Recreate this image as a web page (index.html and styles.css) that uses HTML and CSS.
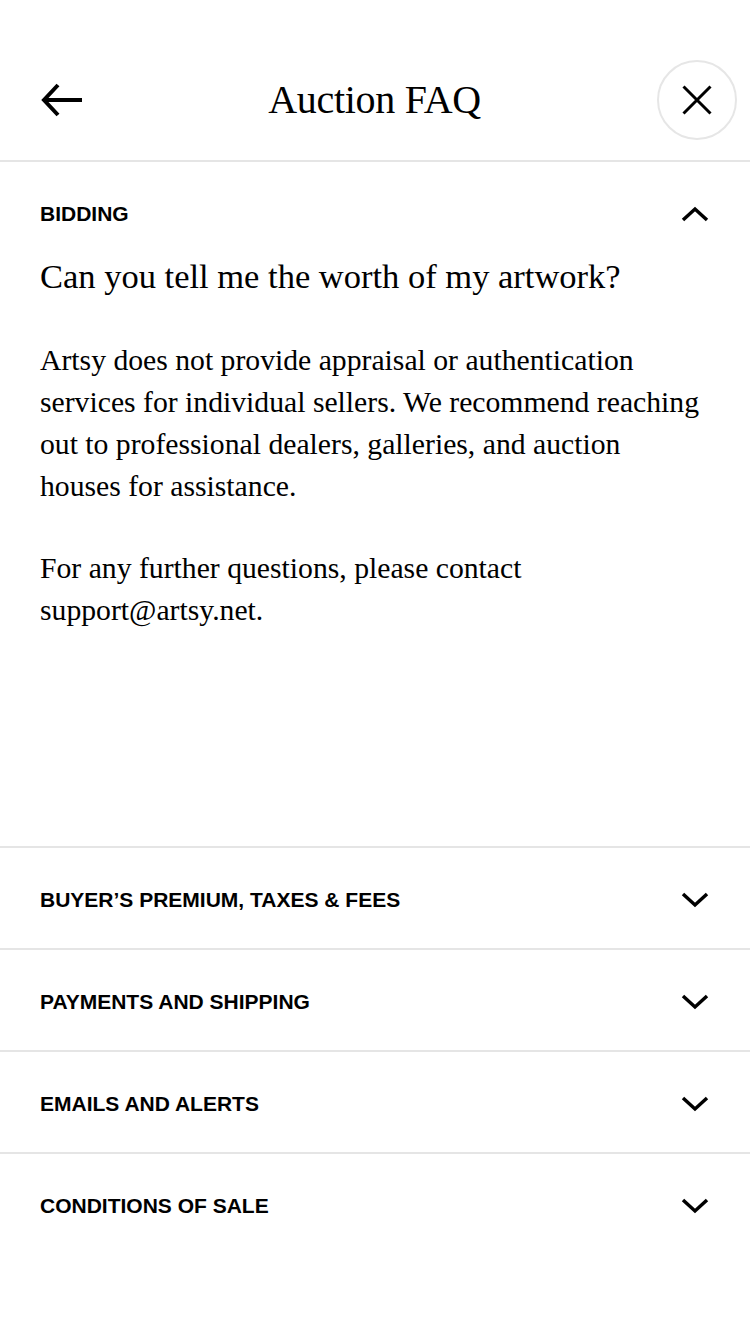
FILE: index.html
```html
<!DOCTYPE html>
<html lang="en">
<head>
<meta charset="utf-8">
<title>Auction FAQ</title>
<link rel="stylesheet" href="styles.css">
</head>
<body>
<div class="screen">
  <header class="topbar">
    <button class="back" aria-label="Back">
      <svg width="44" height="36" viewBox="0 0 44 36"><path d="M42 18H5M18 3L4 18l14 15" fill="none" stroke="#000" stroke-width="4"/></svg>
    </button>
    <h1 class="title">Auction FAQ</h1>
    <button class="close" aria-label="Close">
      <svg width="30" height="30" viewBox="0 0 30 30"><path d="M1.5 1.5l27 27M28.5 1.5l-27 27" fill="none" stroke="#000" stroke-width="3"/></svg>
    </button>
  </header>

  <section class="faq open">
    <div class="faq-head">
      <span class="faq-label">BIDDING</span>
      <svg class="chev" width="28" height="16" viewBox="0 0 28 16"><path d="M2 14L14 3l12 11" fill="none" stroke="#000" stroke-width="3.5"/></svg>
    </div>
    <h2 class="question">Can you tell me the worth of my artwork?</h2>
    <p class="answer">Artsy does not provide appraisal or authentication<br>services for individual sellers. We recommend reaching<br>out to professional dealers, galleries, and auction<br>houses for assistance.</p>
    <p class="answer">For any further questions, please contact<br>support@artsy.net.</p>
  </section>

  <section class="faq">
    <div class="faq-head">
      <span class="faq-label">BUYER’S PREMIUM, TAXES &amp; FEES</span>
      <svg class="chev" width="28" height="16" viewBox="0 0 28 16"><path d="M2 2l12 11L26 2" fill="none" stroke="#000" stroke-width="3.5"/></svg>
    </div>
  </section>
  <section class="faq">
    <div class="faq-head">
      <span class="faq-label">PAYMENTS AND SHIPPING</span>
      <svg class="chev" width="28" height="16" viewBox="0 0 28 16"><path d="M2 2l12 11L26 2" fill="none" stroke="#000" stroke-width="3.5"/></svg>
    </div>
  </section>
  <section class="faq">
    <div class="faq-head">
      <span class="faq-label">EMAILS AND ALERTS</span>
      <svg class="chev" width="28" height="16" viewBox="0 0 28 16"><path d="M2 2l12 11L26 2" fill="none" stroke="#000" stroke-width="3.5"/></svg>
    </div>
  </section>
  <section class="faq">
    <div class="faq-head">
      <span class="faq-label">CONDITIONS OF SALE</span>
      <svg class="chev" width="28" height="16" viewBox="0 0 28 16"><path d="M2 2l12 11L26 2" fill="none" stroke="#000" stroke-width="3.5"/></svg>
    </div>
  </section>
</div>
</body>
</html>
```

FILE: styles.css
```css
* { box-sizing: border-box; }
html, body { margin: 0; padding: 0; background: #fff; }
body {
  width: 750px;
  height: 1334px;
  overflow: hidden;
  color: #000;
  font-family: "Liberation Serif", "Times New Roman", serif;
}
button {
  background: none;
  border: 0;
  padding: 0;
  margin: 0;
  cursor: pointer;
}

.topbar {
  height: 162px;
  border-bottom: 2px solid #e5e5e5;
  display: flex;
  align-items: center;
  justify-content: space-between;
  padding: 40px 13px 0 40px;
}
.back {
  width: 44px;
  height: 36px;
  display: flex;
  align-items: center;
  justify-content: center;
}
.back svg { display: block; }
.title {
  margin: 0;
  font-weight: normal;
  font-size: 40px;
  line-height: 48px;
  letter-spacing: -0.3px;
  padding-left: 8px;
}
.close {
  width: 80px;
  height: 80px;
  border-radius: 50%;
  border: 2px solid #e6e6e6;
  display: flex;
  align-items: center;
  justify-content: center;
}
.close svg { display: block; }

.faq {
  border-bottom: 2px solid #e5e5e5;
  padding: 0 40px;
}
.faq:last-child { border-bottom: 0; }
.faq-head {
  height: 100px;
  padding-top: 4px;
  display: flex;
  align-items: center;
  justify-content: space-between;
}
.faq-label {
  font-family: "Liberation Sans", Arial, sans-serif;
  font-weight: bold;
  font-size: 21px;
  line-height: 28px;
}
.chev { display: block; margin-right: 1px; }

.faq.open {
  height: 686px;
}
.faq.open .faq-head {
  height: 94px;
  padding-top: 10px;
}
.question {
  margin: 0;
  font-weight: normal;
  font-size: 34.5px;
  line-height: 40px;
}
.answer {
  margin: 43px 0 0;
  font-size: 29.7px;
  line-height: 42px;
  white-space: nowrap;
}
.answer + .answer { margin-top: 40px; }
```
